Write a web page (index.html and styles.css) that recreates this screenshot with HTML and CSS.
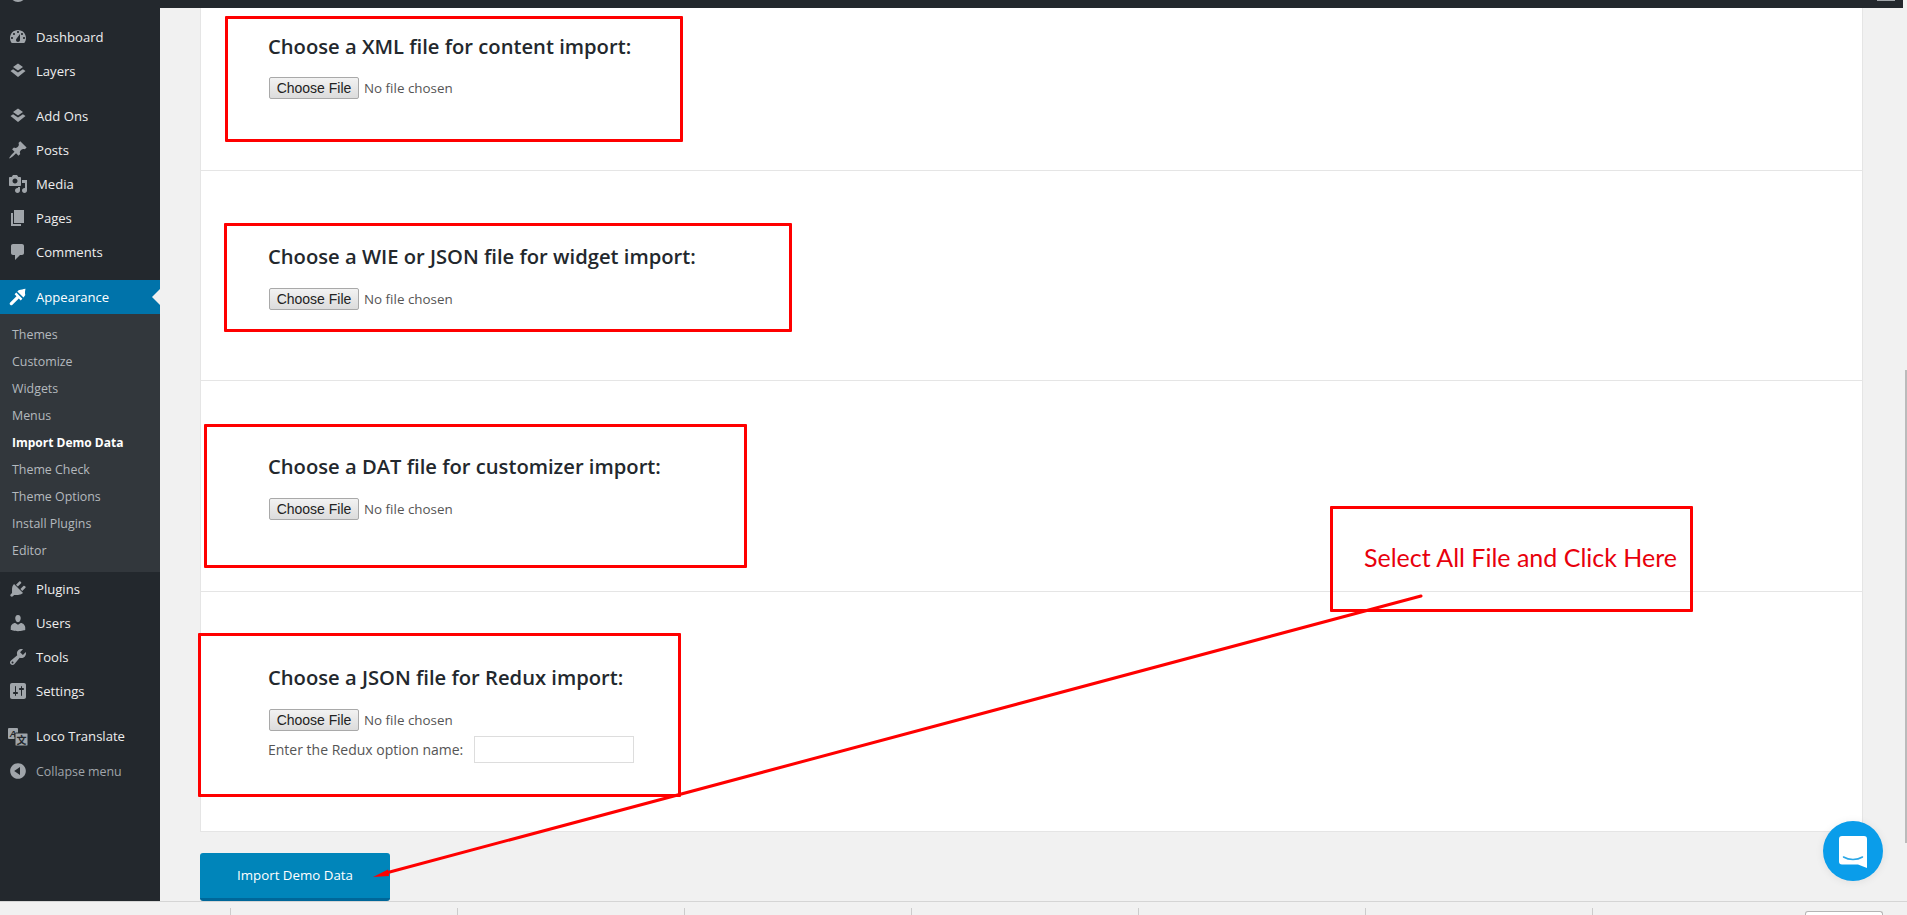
FILE: index.html
```html
<!DOCTYPE html>
<html lang="en">
<head>
<meta charset="utf-8">
<title>Import Demo Data</title>
<link rel="stylesheet" href="styles.css">
</head>
<body>
<div class="page">
  <header class="topbar"><span class="wp-scrap"></span><span class="account-scrap"></span></header>
  <div class="shell">
    <nav class="sidebar">
      <ul class="menu">
        <li class="item"><svg class="ico" viewBox="0 0 20 20"><path fill-rule="evenodd" d="M3.76 16h12.48c1.1-1.37 1.76-3.11 1.76-5 0-4.42-3.58-8-8-8s-8 3.58-8 8c0 1.89.66 3.63 1.76 5zM10 4c.55 0 1 .45 1 1s-.45 1-1 1-1-.45-1-1 .45-1 1-1zM6 6c.55 0 1 .45 1 1s-.45 1-1 1-1-.45-1-1 .45-1 1-1zm8 0c.55 0 1 .45 1 1s-.45 1-1 1-1-.45-1-1 .45-1 1-1zm-5.37 5.55L12 7v6c0 1.1-.9 2-2 2s-2-.9-2-2c0-.57.24-1.08.63-1.45zM4 10c.55 0 1 .45 1 1s-.45 1-1 1-1-.45-1-1 .45-1 1-1zm12 0c.55 0 1 .45 1 1s-.45 1-1 1-1-.45-1-1 .45-1 1-1z"/></svg>Dashboard</li>
        <li class="item"><svg class="ico" viewBox="0 0 20 20"><path d="M10 2.5l5 3.5-5 3.5-5-3.5zM2.5 10l2.6-1.8L10 11.6l4.9-3.4 2.6 1.8-7.5 6z"/></svg>Layers</li>
        <li class="item gap"><svg class="ico" viewBox="0 0 20 20"><path d="M10 2.5l5 3.5-5 3.5-5-3.5zM2.5 10l2.6-1.8L10 11.6l4.9-3.4 2.6 1.8-7.5 6z"/></svg>Add Ons</li>
        <li class="item"><svg class="ico" viewBox="0 0 20 20"><path d="M10.44 3.02l1.82-1.82 6.36 6.35-1.83 1.82c-1.05-.68-2.48-.57-3.41.36l-.75.75c-.92.93-1.04 2.35-.35 3.41l-1.83 1.82-2.41-2.41-2.8 2.79c-.42.42-3.38 2.71-3.8 2.29s1.86-3.39 2.28-3.81l2.79-2.79L4.1 9.36l1.83-1.82c1.05.69 2.48.57 3.4-.36l.75-.75c.93-.92 1.05-2.35.36-3.41z"/></svg>Posts</li>
        <li class="item"><svg class="ico" viewBox="0 0 20 20"><path fill-rule="evenodd" d="M13 11V4c0-.55-.45-1-1-1h-1.67L9 1H5L3.67 3H2c-.55 0-1 .45-1 1v7c0 .55.45 1 1 1h10c.55 0 1-.45 1-1zM7 4.5c1.38 0 2.5 1.12 2.5 2.5S8.38 9.5 7 9.5 4.5 8.38 4.5 7 5.62 4.5 7 4.5zM14 6h5v10.5c0 1.38-1.12 2.5-2.5 2.5S14 17.88 14 16.5s1.12-2.5 2.5-2.5c.17 0 .34.02.5.05V9h-3V6zm-4 8.05V13h2v3.5c0 1.38-1.12 2.5-2.5 2.5S7 17.88 7 16.5 8.12 14 9.5 14c.17 0 .34.02.5.05z"/></svg>Media</li>
        <li class="item"><svg class="ico" viewBox="0 0 20 20"><path d="M6 15V2h10v13H6zm-1 1h8v2H3V5h2v11z"/></svg>Pages</li>
        <li class="item"><svg class="ico" viewBox="0 0 20 20"><path d="M5 2h9c1.1 0 2 .9 2 2v7c0 1.1-.9 2-2 2h-2l-5 5v-5H5c-1.1 0-2-.9-2-2V4c0-1.1.9-2 2-2z"/></svg>Comments</li>
        <li class="item gap current"><svg class="ico" viewBox="0 0 20 20"><path d="M2.2 15.5L8.5 9.2 6.6 7.3l1.7-1.7 6.1 6.1-1.7 1.7-1.9-1.9-6.3 6.3c-.7.7-1.6.7-2.3 0s-.7-1.6 0-2.3z"/><path d="M9.3 4.6L11 2.9c1.5.2 4-.9 6.5-1.2-.5 2.3-.8 4.3-.2 6.3l-1.8 2.6z"/></svg>Appearance</li>
      </ul>
      <ul class="submenu">
        <li>Themes</li>
        <li>Customize</li>
        <li>Widgets</li>
        <li>Menus</li>
        <li class="sub-current">Import Demo Data</li>
        <li>Theme Check</li>
        <li>Theme Options</li>
        <li>Install Plugins</li>
        <li>Editor</li>
      </ul>
      <ul class="menu">
        <li class="item"><svg class="ico" viewBox="0 0 20 20"><path d="M13.11 4.36L9.87 7.6 8 5.73l3.24-3.24c.35-.34 1.05-.2 1.56.32.52.51.66 1.21.31 1.55zm-8 1.77l.91-1.12 9.01 9.01-1.19.84c-.71.71-2.63 1.16-3.82 1.16H6.14L4.9 17.26c-.59.59-1.54.59-2.12 0-.59-.58-.59-1.53 0-2.12l1.24-1.24v-3.88c0-1.13.4-3.19 1.09-3.89zm7.26 3.97l3.24-3.24c.34-.35 1.04-.21 1.55.31.52.51.66 1.21.31 1.55l-3.24 3.25z"/></svg>Plugins</li>
        <li class="item"><svg class="ico" viewBox="0 0 20 20"><path d="M10 9.25c-2.27 0-2.73-3.44-2.73-3.44C7 4.02 7.82 2 9.97 2c2.16 0 2.98 2.02 2.71 3.81 0 0-.41 3.44-2.68 3.44zm0 2.57L12.72 10c2.39 0 4.52 2.33 4.52 4.53v2.49s-3.65 1.13-7.24 1.13c-3.65 0-7.24-1.13-7.24-1.13v-2.49c0-2.25 1.94-4.48 4.47-4.48z"/></svg>Users</li>
        <li class="item"><svg class="ico" viewBox="0 0 20 20"><path fill-rule="evenodd" d="M16.68 9.77c-1.34 1.34-3.3 1.67-4.95.99l-5.41 6.52c-.99.99-2.59.99-3.58 0s-.99-2.59 0-3.57l6.52-5.42c-.68-1.65-.35-3.61.99-4.95 1.28-1.28 3.12-1.62 4.72-1.06l-2.89 2.89 2.82 2.82 2.86-2.87c.53 1.58.18 3.39-1.08 4.65zM3.81 16.21c.4.39 1.04.39 1.43 0 .4-.4.4-1.04 0-1.43-.39-.4-1.03-.4-1.43 0-.39.39-.39 1.03 0 1.43z"/></svg>Tools</li>
        <li class="item"><svg class="ico" viewBox="0 0 20 20"><path fill-rule="evenodd" d="M18 16V4c0-1.1-.9-2-2-2H4c-1.1 0-2 .9-2 2v12c0 1.1.9 2 2 2h12c1.1 0 2-.9 2-2zM8 11h1c.55 0 1 .45 1 1s-.45 1-1 1H8v1.5c0 .28-.22.5-.5.5s-.5-.22-.5-.5V13H6c-.55 0-1-.45-1-1s.45-1 1-1h1V5.5c0-.28.22-.5.5-.5s.5.22.5.5V11zm5-2h-1c-.55 0-1-.45-1-1s.45-1 1-1h1V5.5c0-.28.22-.5.5-.5s.5.22.5.5V7h1c.55 0 1 .45 1 1s-.45 1-1 1h-1v5.5c0 .28-.22.5-.5.5s-.5-.22-.5-.5V9z"/></svg>Settings</li>
        <li class="item gap"><svg class="ico" viewBox="0 0 20 20"><rect x="0" y="2" width="10" height="11" rx="1"/><text class="loco-a" x="5" y="11">A</text><rect x="7" y="7" width="13" height="13" rx="1" class="loco-back"/><text class="loco-zh" x="13.5" y="18">文</text></svg>Loco Translate</li>
        <li class="item collapse"><svg class="ico" viewBox="0 0 20 20"><path fill-rule="evenodd" d="M10 2.16c4.33 0 7.84 3.51 7.84 7.84s-3.51 7.84-7.84 7.84S2.16 14.33 2.16 10 5.67 2.16 10 2.16zm2 11.72V6.12L6.18 10z"/></svg>Collapse menu</li>
      </ul>
    </nav>
    <main class="main">
      <div class="card">
        <section class="row row-first">
          <h2 class="title">Choose a XML file for content import:</h2>
          <div class="file"><button class="file-btn" type="button">Choose File</button><span class="file-name">No file chosen</span></div>
        </section>
        <section class="row">
          <h2 class="title">Choose a WIE or JSON file for widget import:</h2>
          <div class="file"><button class="file-btn" type="button">Choose File</button><span class="file-name">No file chosen</span></div>
        </section>
        <section class="row">
          <h2 class="title">Choose a DAT file for customizer import:</h2>
          <div class="file"><button class="file-btn" type="button">Choose File</button><span class="file-name">No file chosen</span></div>
        </section>
        <section class="row row-last">
          <h2 class="title">Choose a JSON file for Redux import:</h2>
          <div class="file"><button class="file-btn" type="button">Choose File</button><span class="file-name">No file chosen</span></div>
          <label class="option"><span>Enter the Redux option name:</span><input class="option-input" type="text"></label>
        </section>
      </div>
      <button class="import" type="button">Import Demo Data</button>
    </main>
  </div>
  <footer class="bottom">
    <span class="tick"></span><span class="tick"></span><span class="tick"></span><span class="tick"></span><span class="tick"></span><span class="tick"></span><span class="tick tick-last"></span>
    <span class="bottom-btn"></span>
  </footer>

  <div class="mark mark-1"></div>
  <div class="mark mark-2"></div>
  <div class="mark mark-3"></div>
  <div class="mark mark-4"></div>
  <div class="mark mark-5"><span class="mark-text">Select All File and Click Here</span></div>
  <svg class="arrow" viewBox="0 0 1907 915"><line x1="1421" y1="596" x2="386" y2="873"/><polygon points="373,877 388,869.5 389,876"/></svg>
  <div class="scrollthumb"></div>
  <div class="chat"><svg viewBox="0 0 28 32" width="28" height="32"><path fill="#fff" d="M3 0h22a3 3 0 0 1 3 3v29l-9-3.4H3a3 3 0 0 1-3-3V3a3 3 0 0 1 3-3z"/><path class="smile" d="M4.5 21c5.5 3.2 13.5 3.2 19 0"/></svg></div>
</div>
</body>
</html>
```
FILE: styles.css
```css
* { box-sizing: border-box; }
html, body { margin: 0; padding: 0; }
body {
  background: #f1f1f1;
  font-family: "Open Sans", "Noto Sans", sans-serif;
  overflow: hidden;
}
.page {
  position: relative;
  width: 1907px;
  height: 915px;
  display: flex;
  flex-direction: column;
  overflow: hidden;
}

/* top admin bar */
.topbar {
  position: relative;
  height: 8px;
  flex: none;
  width: 1903px;
  background: #23282d;
  overflow: hidden;
}
.wp-scrap {
  position: absolute;
  left: 9px;
  top: -18px;
  width: 18px;
  height: 20px;
  border-radius: 50%;
  background: #a0a5aa;
}
.account-scrap {
  position: absolute;
  left: 1877px;
  top: 0;
  width: 18px;
  height: 1px;
  background: #a0a5aa;
}

.shell { display: flex; flex: none; height: 893px; }

/* sidebar */
.sidebar {
  flex: none;
  width: 160px;
  background: #23282d;
  padding-top: 12px;
}
.menu, .submenu { list-style: none; margin: 0; padding: 0; }
.item {
  display: flex;
  align-items: center;
  height: 34px;
  padding-left: 8px;
  color: #eee;
  font-size: 13.1px;
}
.item.gap { margin-top: 11px; }
.ico {
  flex: none;
  width: 20px;
  height: 20px;
  margin-right: 8px;
  fill: #a0a5aa;
}
.current {
  position: relative;
  background: #0073aa;
  color: #fff;
}
.current .ico { fill: #fff; }
.current::after {
  content: "";
  position: absolute;
  right: 0;
  top: 9px;
  border: 8px solid transparent;
  border-left-width: 0;
  border-right-color: #f1f1f1;
}
.submenu {
  background: #32373c;
  padding: 7px 0 8px;
}
.submenu li {
  height: 27px;
  line-height: 27px;
  padding-left: 12px;
  font-size: 12.4px;
  color: #b4b9be;
}
.submenu .sub-current { color: #fff; font-weight: 700; font-size: 12px; }
.collapse { margin-top: 1px; color: #a0a5aa; font-size: 12.4px; }
.loco-a { font: italic 700 9px "Liberation Sans", sans-serif; fill: #23282d; text-anchor: middle; }
.loco-back { stroke: #23282d; stroke-width: 1; }
.loco-zh { font: 700 10px "Noto Sans CJK SC", sans-serif; fill: #23282d; text-anchor: middle; }

/* main */
.main { flex: 1; padding-left: 40px; }
.card {
  width: 1663px;
  background: #fff;
  border: 1px solid #e5e5e5;
  border-top: 0;
  margin-bottom: 21px;
}
.row {
  padding: 73px 0 70px 67px;
  border-bottom: 1px solid #e5e5e5;
}
.row-first { padding-top: 26px; padding-bottom: 71px; }
.row:nth-child(3) { padding-bottom: 71px; }
.row-last { border-bottom: 0; padding-bottom: 68px; }
.title {
  margin: 0 0 20px;
  font-size: 20.2px;
  line-height: 24px;
  font-weight: 550;
  color: #23282d;
}
.row-first .title { margin-bottom: 19px; }
.file { display: flex; align-items: center; height: 22px; padding-left: 1px; }
.file-btn {
  width: 90px;
  height: 22px;
  padding: 0;
  border: 1px solid #a9a9a9;
  border-radius: 2px;
  background: linear-gradient(#f2f2f2, #dcdcdc);
  font: 14px "Liberation Sans", Arial, sans-serif;
  color: #222;
}
.file-name {
  margin-left: 5px;
  font-size: 13.4px;
  color: #555;
}
.option {
  display: flex;
  align-items: center;
  gap: 11px;
  margin-top: 5px;
  font-size: 14px;
  color: #555;
}
.option-input {
  width: 160px;
  height: 27px;
  border: 1px solid #ddd;
  background: #fff;
  padding: 0;
}
.import {
  display: block;
  width: 190px;
  height: 48px;
  padding: 0 0 2px;
  border: 0;
  border-bottom: 3px solid #006799;
  border-radius: 3px;
  background: #0085ba;
  color: #fff;
  font: 13.3px "Open Sans", sans-serif;
}

/* footer strip */
.bottom {
  position: relative;
  flex: none;
  height: 14px;
  display: flex;
  align-items: flex-end;
  padding-left: 230px;
  border-top: 1px solid #d5d5d5;
}
.tick {
  width: 227px;
  height: 7px;
  border-left: 1px solid #ccc;
}
.tick-last { width: 213px; }
.bottom-btn {
  width: 78px;
  height: 4px;
  border: 1px solid #b5b5b5;
  border-bottom: 0;
  border-radius: 3px 3px 0 0;
  background: #fff;
}

/* annotations drawn over the screenshot */
.mark {
  position: absolute;
  border: 3px solid #f00;
  border-radius: 1px;
}
.mark-1 { left: 225px; top: 16px; width: 458px; height: 126px; }
.mark-2 { left: 224px; top: 223px; width: 568px; height: 109px; }
.mark-3 { left: 204px; top: 424px; width: 543px; height: 144px; }
.mark-4 { left: 198px; top: 633px; width: 483px; height: 164px; }
.mark-5 { left: 1330px; top: 506px; width: 363px; height: 106px; }
.mark-text {
  position: absolute;
  left: 31px;
  top: 31px;
  white-space: nowrap;
  font: 25px/34px Lato, sans-serif;
  color: #e8000c;
}
.arrow {
  position: absolute;
  left: 0;
  top: 0;
  width: 1907px;
  height: 915px;
  pointer-events: none;
}
.arrow line { stroke: #f00; stroke-width: 3; stroke-linecap: round; }
.arrow polygon { fill: #f00; }

.scrollthumb {
  position: absolute;
  left: 1905px;
  top: 370px;
  width: 2px;
  height: 473px;
  background: #bbb;
}

.chat {
  position: absolute;
  left: 1823px;
  top: 821px;
  width: 60px;
  height: 60px;
  border-radius: 50%;
  background: #0a9dea;
  box-shadow: 0 1px 8px rgba(0, 0, 0, .08);
  display: flex;
  align-items: center;
  justify-content: center;
  padding-top: 2px;
}
.smile { fill: none; stroke: #2aa7e6; stroke-width: 1.5; stroke-linecap: round; }
```
